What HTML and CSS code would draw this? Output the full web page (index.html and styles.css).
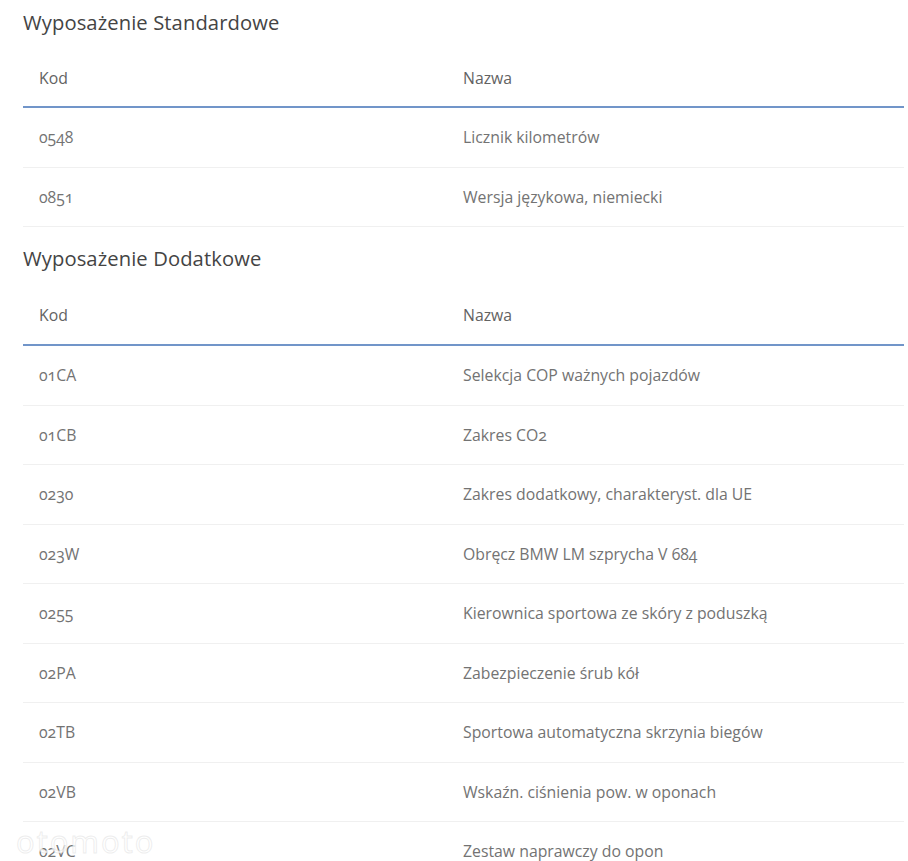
FILE: index.html
```html
<!DOCTYPE html>
<html lang="pl">
<head>
<meta charset="utf-8">
<link rel="stylesheet" href="styles.css">
</head>
<body>
<div class="page">
  <section class="section">
    <h2 class="title">Wyposażenie Standardowe</h2>
    <table class="equip">
      <thead><tr><th class="code">Kod</th><th>Nazwa</th></tr></thead>
      <tbody>
        <tr><td class="code">0548</td><td>Licznik kilometrów</td></tr>
        <tr><td class="code">0851</td><td>Wersja językowa, niemiecki</td></tr>
      </tbody>
    </table>
  </section>
  <section class="section section-extra">
    <h2 class="title">Wyposażenie Dodatkowe</h2>
    <table class="equip">
      <thead><tr><th class="code">Kod</th><th>Nazwa</th></tr></thead>
      <tbody>
        <tr><td class="code">01CA</td><td>Selekcja COP ważnych pojazdów</td></tr>
        <tr><td class="code">01CB</td><td>Zakres CO2</td></tr>
        <tr><td class="code">0230</td><td>Zakres dodatkowy, charakteryst. dla UE</td></tr>
        <tr><td class="code">023W</td><td>Obręcz BMW LM szprycha V 684</td></tr>
        <tr><td class="code">0255</td><td>Kierownica sportowa ze skóry z poduszką</td></tr>
        <tr><td class="code">02PA</td><td>Zabezpieczenie śrub kół</td></tr>
        <tr><td class="code">02TB</td><td>Sportowa automatyczna skrzynia biegów</td></tr>
        <tr><td class="code">02VB</td><td>Wskaźn. ciśnienia pow. w oponach</td></tr>
        <tr><td class="code">02VC</td><td>Zestaw naprawczy do opon</td></tr>
      </tbody>
    </table>
  </section>
</div>
<div class="watermark">otomoto</div>
</body>
</html>
```
FILE: styles.css
```css
html, body {
  margin: 0;
  padding: 0;
  background: #ffffff;
}
body {
  font-family: "Open Sans", "Liberation Sans", sans-serif;
  color: #737373;
  overflow: hidden;
  height: 861px;
  position: relative;
}
.page {
  padding: 10px 4px 0 23px;
}
.section + .section {
  margin-top: 19px;
}
.title {
  margin: 0 0 15px 0;
  font-size: 20.2px;
  line-height: 24px;
  font-weight: 500;
  color: #444444;
  letter-spacing: 0.1px;
}
.equip {
  width: 100%;
  border-collapse: collapse;
  font-size: 15.8px;
  font-variant-numeric: oldstyle-nums;
  font-feature-settings: "onum" 1;
}
.equip th,
.equip td {
  text-align: left;
  padding: 0 16px;
  font-weight: 400;
}
.equip th {
  height: 57px;
  color: #636363;
  border-bottom: 2px solid #7195c9;
}
.equip td {
  height: 58.6px;
  border-bottom: 1px solid #f0f0f0;
  color: #737373;
}
.section-extra .title {
  margin-bottom: 16px;
}
.section-extra .equip th {
  height: 58px;
}
.section-extra .equip td {
  height: 58.5px;
}
.equip .code {
  width: 392px;
}
.watermark {
  position: absolute;
  left: 16px;
  top: 820px;
  font-family: "Open Sans", sans-serif;
  font-size: 31px;
  line-height: 42px;
  color: rgba(255, 255, 255, 0.75);
  -webkit-text-stroke: 1px rgba(215, 215, 215, 0.45);
  letter-spacing: 2px;
}
```
